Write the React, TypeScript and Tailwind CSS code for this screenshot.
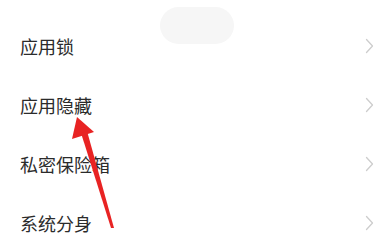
const items = ["应用锁", "应用隐藏", "私密保险箱", "系统分身"];

function Chevron() {
  return (
    <svg width="9" height="16" viewBox="0 0 9 16" fill="none" className="shrink-0">
      <path d="M1.5 1.5 L7.5 8 L1.5 14.5" stroke="#cdcdcd" strokeWidth="1.3" strokeLinecap="round" strokeLinejoin="round" />
    </svg>
  );
}

export default function App() {
  return (
    <div className="relative w-[380px] h-[245px] overflow-hidden bg-white font-['Noto_Sans_CJK_SC',sans-serif]">
      <div className="pt-4">
        {items.map((label) => (
          <div key={label} className="flex items-center justify-between h-[59px] pl-5 pr-[6px]">
            <span className="text-[18px] text-[#2b2b2b] leading-none">{label}</span>
            <Chevron />
          </div>
        ))}
      </div>

      {/* faded toast pill over the list */}
      <div className="absolute left-[160px] top-[7px] w-[74px] h-[37px] rounded-full bg-[#f6f6f6] blur-[0.5px]" />

      <svg className="absolute left-0 top-0" width="380" height="245" viewBox="0 0 380 245">
        <polygon points="77,117 94,132 72,139" fill="#e82323" />
        <polygon points="81,133 87,131 114,228 111,228" fill="#e82323" />
      </svg>
    </div>
  );
}
